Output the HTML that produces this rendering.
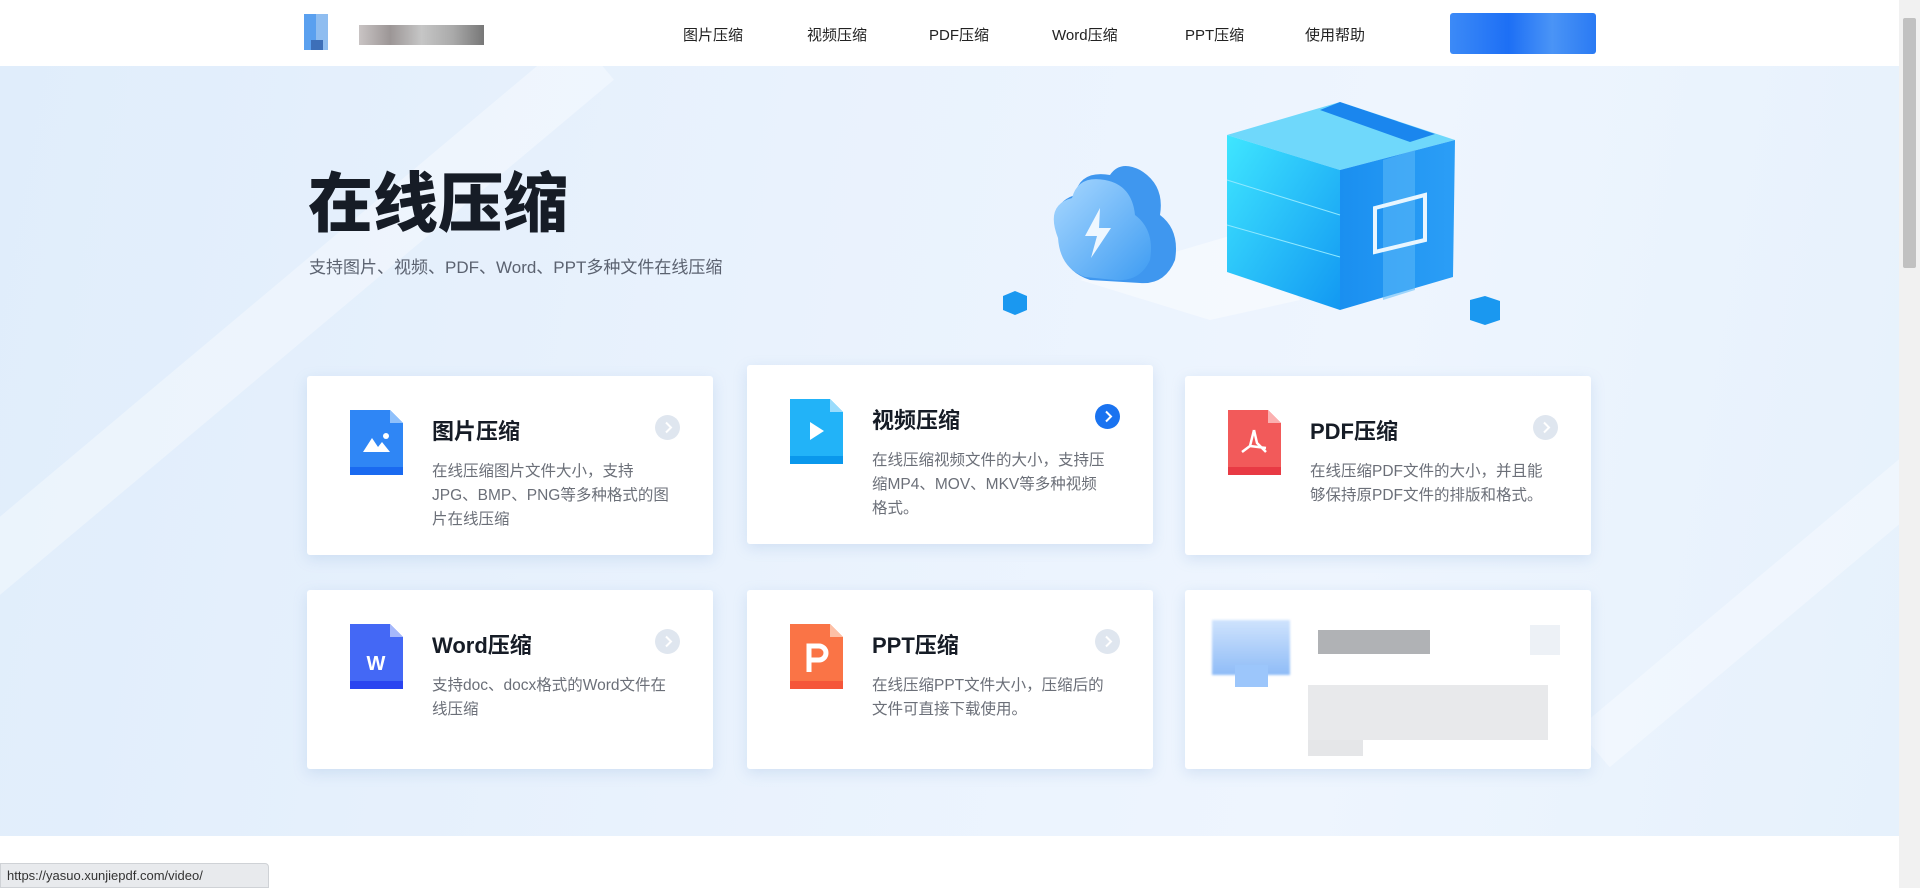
<!DOCTYPE html>
<html><head><meta charset="utf-8"><style>
*{margin:0;padding:0;box-sizing:border-box}
body{width:1920px;height:888px;overflow:hidden;background:#fff;font-family:"Liberation Sans","Noto Sans CJK SC",sans-serif;position:relative}
.hdr{position:absolute;left:0;top:0;width:1899px;height:66px;background:#fff;z-index:3}
.nav a{position:absolute;top:24px;font-size:15px;color:#222;text-decoration:none}
.hero{position:absolute;left:0;top:66px;width:1899px;height:770px;background:linear-gradient(100deg,#e0edfb 0%,#e9f2fd 40%,#eef5fe 70%,#e6f1fc 100%);overflow:hidden}
.stripe{position:absolute;background:rgba(255,255,255,.35);transform:rotate(-40deg)}
h1{position:absolute;left:308px;top:168px;font-size:65px;line-height:72px;font-weight:900;color:#161c26;letter-spacing:0;z-index:2}
.sub{position:absolute;left:309px;top:253px;font-size:17px;color:#5b6270;z-index:2}
.card{position:absolute;width:406px;height:179px;background:#fff;border-radius:3px;box-shadow:0 4px 14px rgba(120,160,210,.22);z-index:2}
.card .ic{position:absolute;left:43px;top:34px}
.card h3{position:absolute;left:125px;top:38px;font-size:22px;font-weight:bold;color:#161c26}
.card p{position:absolute;left:125px;top:84px;width:240px;font-size:15.5px;line-height:24px;color:#6b6f78}
.arr{position:absolute;left:348px;top:39px;width:25px;height:25px;border-radius:50%;background:#dfe6ef}
.arr.on{background:#1a73f0}
.arr svg{position:absolute;left:0;top:0}
.status{position:absolute;left:0;top:863px;width:269px;height:25px;background:#e8eaed;border:1px solid #cfd2d6;border-radius:0 4px 0 0;font-size:13px;color:#333;padding:4px 0 0 6px;z-index:5}
.sb{position:absolute;right:0;top:0;width:21px;height:888px;background:#f1f1f1;z-index:4}
.sb div{position:absolute;left:4px;top:18px;width:13px;height:250px;background:#c1c1c1;border-radius:2px}
.blk{position:absolute}
</style></head><body>
<div class="hdr">
 <div class="blk" style="left:304px;top:14px;width:12px;height:36px;background:#5aa0ef"></div>
 <div class="blk" style="left:316px;top:14px;width:12px;height:36px;background:#8fbdf0"></div>
 <div class="blk" style="left:311px;top:40px;width:12px;height:10px;background:#3d6fb8"></div>
 <div class="blk" style="left:359px;top:25px;width:125px;height:20px;background:linear-gradient(90deg,#c9c4c4,#9c9696,#c6c6c6,#aaa,#777)"></div>
 <div class="nav">
  <a style="left:683px">图片压缩</a><a style="left:807px">视频压缩</a><a style="left:929px">PDF压缩</a><a style="left:1052px">Word压缩</a><a style="left:1185px">PPT压缩</a><a style="left:1305px">使用帮助</a>
 </div>
 <div class="blk" style="left:1450px;top:13px;width:146px;height:41px;background:linear-gradient(90deg,#3c8af7,#1d6ff5 40%,#4a94f6 70%,#2a7af3);border-radius:3px"></div>
</div>
<div class="hero">
 <div class="stripe" style="left:-200px;top:250px;width:900px;height:60px"></div>
 <div class="stripe" style="left:1500px;top:400px;width:800px;height:50px"></div>
</div>
<svg style="position:absolute;left:0;top:0;z-index:1" width="1920" height="360" viewBox="0 0 1920 360">
  <defs><linearGradient id="f" x1="0" y1="0" x2="1" y2="1"><stop offset="0" stop-color="#3fe6ff"/><stop offset="1" stop-color="#1298f2"/></linearGradient>
  <linearGradient id="s" x1="0" y1="0" x2="1" y2="0"><stop offset="0" stop-color="#1a8ff0"/><stop offset="1" stop-color="#2b9ef6"/></linearGradient>
  <linearGradient id="c" x1="0" y1="0" x2="1" y2="1"><stop offset="0" stop-color="#a9d8ff"/><stop offset="1" stop-color="#3e9cf2"/></linearGradient></defs>
  <polygon points="1080,280 1250,230 1300,300 1210,320" fill="#fff" opacity=".45"/>
  <path d="M1062,240 Q1045,205 1075,195 Q1080,170 1110,175 Q1120,160 1140,170 Q1165,185 1160,215 Q1180,230 1175,260 Q1165,285 1140,283 L1090,280 Q1060,270 1062,240Z" fill="#3f97ef"/>
  <path d="M1058,238 Q1045,205 1072,198 Q1078,175 1105,180 Q1132,185 1135,215 Q1155,230 1150,260 Q1140,282 1115,280 L1085,277 Q1060,268 1058,238Z" fill="url(#c)"/>
  <path d="M1100,208 L1085,236 L1097,236 L1091,258 L1111,228 L1099,228Z" fill="#eef7ff"/>
  <polygon points="1227,135 1340,102 1455,140 1340,170" fill="#6fd8fb"/>
  <polygon points="1320,110 1340,102 1435,134 1410,142" fill="#1a86ee"/>
  <polygon points="1227,135 1340,170 1340,310 1227,272" fill="url(#f)"/>
  <polygon points="1340,170 1455,140 1453,277 1340,310" fill="url(#s)"/>
  <polygon points="1383,160 1415,150 1415,290 1383,300" fill="#5dbaf8" opacity=".55"/>
  <line x1="1227" y1="180" x2="1340" y2="215" stroke="#8fe8ff" stroke-width="1"/>
  <line x1="1227" y1="225" x2="1340" y2="257" stroke="#8fe8ff" stroke-width="1"/>
  <polygon points="1375,208 1425,195 1425,240 1375,252" fill="none" stroke="#e8f6ff" stroke-width="4"/>
  <polygon points="1003,296 1015,291 1027,296 1027,310 1015,315 1003,310" fill="#1a98f0"/>
  <polygon points="1470,300 1485,296 1500,301 1500,320 1485,325 1470,320" fill="#1a98f0"/>
</svg>
<h1>在线压缩</h1>
<div class="sub">支持图片、视频、PDF、Word、PPT多种文件在线压缩</div>

<div class="card" style="left:307px;top:376px">
 <svg class="ic" width="53" height="65" viewBox="0 0 53 65"><path d="M0,0H40L53,13V65H0Z" fill="#2f86f5"/><path d="M40,0V13H53Z" fill="#8fc0fb"/><rect y="57" width="53" height="8" fill="#1a6af0"/><path d="M13,42L22,28L28,37L32,32L40,42Z" fill="#fff"/><circle cx="36" cy="26" r="3" fill="#fff"/></svg>
 <h3>图片压缩</h3><div class="arr"><svg width="25" height="25"><path d="M11,7.5L16,12.5L11,17.5" stroke="#fff" stroke-width="2" fill="none"/></svg></div>
 <p>在线压缩图片文件大小，支持JPG、BMP、PNG等多种格式的图片在线压缩</p>
</div>
<div class="card" style="left:747px;top:365px">
 <svg class="ic" width="53" height="65" viewBox="0 0 53 65"><path d="M0,0H40L53,13V65H0Z" fill="#22b3f8"/><path d="M40,0V13H53Z" fill="#9adcfc"/><rect y="57" width="53" height="8" fill="#0a98ec"/><path d="M20,23L34,32L20,41Z" fill="#fff"/></svg>
 <h3>视频压缩</h3><div class="arr on"><svg width="25" height="25"><path d="M11,7.5L16,12.5L11,17.5" stroke="#fff" stroke-width="2" fill="none"/></svg></div>
 <p>在线压缩视频文件的大小，支持压缩MP4、MOV、MKV等多种视频格式。</p>
</div>
<div class="card" style="left:1185px;top:376px">
 <svg class="ic" width="53" height="65" viewBox="0 0 53 65"><path d="M0,0H40L53,13V65H0Z" fill="#f25a5a"/><path d="M40,0V13H53Z" fill="#fbb0b0"/><rect y="57" width="53" height="8" fill="#e83a44"/><path d="M26,20L29,33L38,42M26,20L22,36L14,42M22,36L38,38" stroke="#fff" stroke-width="2.5" fill="none"/></svg>
 <h3>PDF压缩</h3><div class="arr"><svg width="25" height="25"><path d="M11,7.5L16,12.5L11,17.5" stroke="#fff" stroke-width="2" fill="none"/></svg></div>
 <p>在线压缩PDF文件的大小，并且能够保持原PDF文件的排版和格式。</p>
</div>
<div class="card" style="left:307px;top:590px">
 <svg class="ic" width="53" height="65" viewBox="0 0 53 65"><path d="M0,0H40L53,13V65H0Z" fill="#4468f5"/><path d="M40,0V13H53Z" fill="#a6b8fb"/><rect y="57" width="53" height="8" fill="#2a44f0"/><text x="26" y="46" text-anchor="middle" font-family="Liberation Sans" font-weight="bold" font-size="20" fill="#fff">W</text></svg>
 <h3>Word压缩</h3><div class="arr"><svg width="25" height="25"><path d="M11,7.5L16,12.5L11,17.5" stroke="#fff" stroke-width="2" fill="none"/></svg></div>
 <p>支持doc、docx格式的Word文件在线压缩</p>
</div>
<div class="card" style="left:747px;top:590px">
 <svg class="ic" width="53" height="65" viewBox="0 0 53 65"><path d="M0,0H40L53,13V65H0Z" fill="#fa7446"/><path d="M40,0V13H53Z" fill="#fdc0a6"/><rect y="57" width="53" height="8" fill="#f5563a"/><path d="M19,48V22H29A7,7 0 0 1 29,36H19" stroke="#fff" stroke-width="5" fill="none"/></svg>
 <h3>PPT压缩</h3><div class="arr"><svg width="25" height="25"><path d="M11,7.5L16,12.5L11,17.5" stroke="#fff" stroke-width="2" fill="none"/></svg></div>
 <p>在线压缩PPT文件大小，压缩后的文件可直接下载使用。</p>
</div>
<div class="card" style="left:1185px;top:590px">
 <div class="blk" style="left:27px;top:30px;width:78px;height:55px;background:linear-gradient(180deg,#cfe3fd,#8fbcf7);filter:blur(1px)"></div>
 <div class="blk" style="left:50px;top:75px;width:33px;height:22px;background:#9cc6fb"></div>
 <div class="blk" style="left:133px;top:40px;width:112px;height:24px;background:#8e9196;opacity:.7"></div>
 <div class="blk" style="left:345px;top:35px;width:30px;height:30px;background:#edf1f6"></div>
 <div class="blk" style="left:123px;top:95px;width:240px;height:55px;background:#e8e9eb"></div>
 <div class="blk" style="left:123px;top:150px;width:55px;height:16px;background:#e5e6e8"></div>
</div>
<div class="sb"><div></div></div>
<div class="status">https://yasuo.xunjiepdf.com/video/</div>
</body></html>
